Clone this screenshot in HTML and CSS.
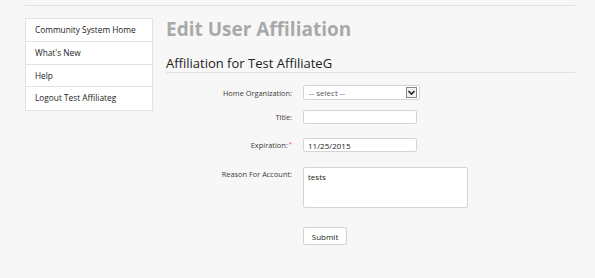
FILE: index.html
```html
<!DOCTYPE html>
<html lang="en">
<head>
    <meta charset="UTF-8">
    <title>Edit User Affiliation</title>
    <link rel="stylesheet" href="styles.css">
</head>
<body>
    <div class="page">
        <div class="top-bar"></div>

        <div class="layout">
            <nav class="side-nav">
                <a href="#">Community System Home</a>
                <a href="#">What's New</a>
                <a href="#">Help</a>
                <a href="#">Logout Test Affiliateg</a>
            </nav>

            <main class="content">
                <h1 class="page-title">Edit User Affiliation</h1>
                <h2 class="section-title">Affiliation for Test AffiliateG</h2>

                <form class="edit-form">
                    <label class="form-label" for="org">Home Organization:</label>
                    <div class="form-field">
                        <div class="select-box">
                            <span class="select-text">-- select --</span>
                            <span class="select-arrow">
                                <svg width="9" height="9" viewBox="0 0 9 9"><path d="M1.5 3 L4.5 6 L7.5 3" fill="none" stroke="#222" stroke-width="1.6"/></svg>
                            </span>
                        </div>
                    </div>

                    <label class="form-label" for="title">Title:</label>
                    <div class="form-field">
                        <input class="text-input" id="title" type="text">
                    </div>

                    <label class="form-label exp-row" for="exp">Expiration:<span class="required">*</span></label>
                    <div class="form-field exp-row">
                        <input class="text-input" id="exp" type="text" value="11/25/2015">
                    </div>

                    <label class="form-label label-top reason-row" for="reason">Reason For Account:</label>
                    <div class="form-field reason-row">
                        <textarea class="text-area" id="reason">tests</textarea>
                    </div>

                    <div></div>
                    <div class="form-field submit-row">
                        <button class="submit-btn" type="button">Submit</button>
                    </div>
                </form>
            </main>
        </div>
    </div>
</body>
</html>
```

FILE: styles.css
```css
:root {
    --page-bg: #f7f7f7;
    --line: #e2e2e2;
    --border: #d4d4d4;
    --text: #222222;
    --muted: #a9a9a9;
}

* {
    margin: 0;
    padding: 0;
    box-sizing: border-box;
}

body {
    font-family: "Open Sans", "Liberation Sans", sans-serif;
    background: var(--page-bg);
    color: var(--text);
    width: 595px;
    height: 278px;
    overflow: hidden;
}

.page {
    padding: 0 20px 0 25px;
}

.top-bar {
    height: 6px;
    border-bottom: 1px solid var(--line);
}

.layout {
    display: flex;
    gap: 13px;
    margin-top: 12px;
}

.side-nav {
    width: 128px;
    flex-shrink: 0;
    background: #fff;
    border: 1px solid var(--line);
    display: flex;
    flex-direction: column;
    align-self: flex-start;
}

.side-nav a {
    display: block;
    height: 22.75px;
    line-height: 21px;
    padding-left: 9px;
    font-size: 8.3px;
    color: var(--text);
    text-decoration: none;
    border-bottom: 1px solid var(--line);
}

.side-nav a:last-child {
    border-bottom: none;
}

.content {
    flex: 1;
}

.page-title {
    font-size: 19px;
    font-weight: 700;
    color: var(--muted);
    line-height: 22px;
}

.section-title {
    font-size: 13px;
    font-weight: 400;
    line-height: 16px;
    margin-top: 15px;
    padding-bottom: 1px;
    border-bottom: 1px solid var(--line);
}

/* form grid: labels right, fields left */
.edit-form {
    display: grid;
    grid-template-columns: 126px 1fr;
    column-gap: 11px;
    row-gap: 10px;
    margin-top: 12px;
}

.form-label {
    font-size: 7.4px;
    color: #3a3a3a;
    text-align: right;
    align-self: center;
}

.label-top {
    align-self: start;
    padding-top: 2px;
}

.exp-row {
    margin-top: 4px;
}

.reason-row {
    margin-top: 5px;
}

.required {
    color: #e05555;
    margin-left: 1px;
    font-size: 6px;
    vertical-align: top;
}

.select-box {
    width: 117px;
    height: 15px;
    background: #fff;
    border: 1px solid var(--border);
    border-radius: 2px;
    display: flex;
    align-items: center;
    justify-content: space-between;
    padding: 0 2px 0 5px;
}

.select-text {
    font-size: 8px;
    color: #555;
}

.select-arrow {
    width: 11px;
    height: 11px;
    border: 1px solid #888;
    background: #f0f0f0;
    display: flex;
    align-items: center;
    justify-content: center;
}

.text-input {
    display: block;
    width: 114px;
    height: 14px;
    background: #fff;
    border: 1px solid var(--border);
    border-radius: 2px;
    padding: 0 4px;
    font-family: inherit;
    font-size: 8px;
    color: var(--text);
}

.text-area {
    display: block;
    width: 165px;
    height: 41px;
    background: #fff;
    border: 1px solid var(--border);
    border-radius: 2px;
    padding: 3px 4px;
    font-family: inherit;
    font-size: 8px;
    color: var(--text);
    resize: none;
}

.submit-row {
    margin-top: 9px;
}

.submit-btn {
    display: block;
    width: 44px;
    height: 18px;
    background: #fff;
    border: 1px solid var(--border);
    border-radius: 2px;
    font-family: inherit;
    font-size: 8px;
    color: var(--text);
}
```
